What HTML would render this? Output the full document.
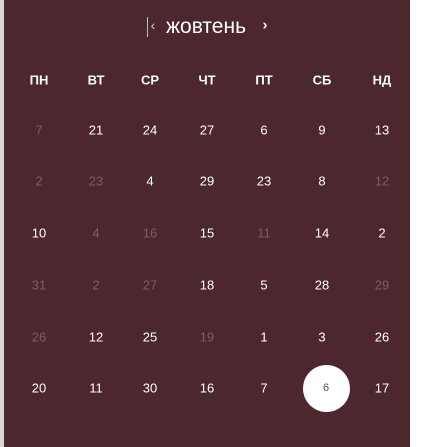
<!DOCTYPE html>
<html><head><meta charset="utf-8"><style>
body{margin:0;width:438px;height:447px;background:#fff;position:relative;overflow:hidden;font-family:"Liberation Sans",sans-serif}
.strip{position:absolute;left:0;top:0;width:4px;height:447px;background:#d8d8d8}
.p{position:absolute;left:4px;top:0;width:406px;height:447px;background:#4d272e}
.t{position:absolute;color:#fff;transform:translate(-50%,-50%);white-space:nowrap}
.h{font-weight:bold;font-size:13px}
.d{font-size:13px}
.m{color:#7d5d63}
.c{position:absolute;left:303px;top:365px;width:47px;height:47px;border-radius:50%;background:#fff}
</style></head><body>
<div class="strip"></div><div class="p"></div>
<div class="t" style="left:147px;top:26px;width:1px;height:20px;background:#bbb;transform:none;top:17px"></div>
<div class="t" style="left:153px;top:25px;font-size:14px;color:#ccc">‹</div>
<div class="t" style="left:206px;top:27px;font-size:21px">жовтень</div>
<div class="t" style="left:265px;top:25px;font-size:15px;font-weight:bold">›</div>
<div class="c"></div>
<div id="g"></div>
<script>
var xs=[39,96,150,207,264,322,382],ys=[130,181,233,285,337,388];
var hd=["ПН","ВТ","СР","ЧТ","ПТ","СБ","НД"];
var rows=[["7m","21","24","27","6","9","13"],["2m","23m","4","29","23","8","12m"],["10","4m","16m","15","11m","14","2"],["31m","2m","27m","18","5","28","29m"],["26m","12","25","19m","1","3","26"],["20","11","30","16","7","6s","17"]];
var h="";
hd.forEach((t,i)=>h+=`<div class="t h" style="left:${xs[i]}px;top:80px">${t}</div>`);
rows.forEach((r,j)=>r.forEach((v,i)=>{var m=v.endsWith("m"),s=v.endsWith("s");v=v.replace(/[ms]$/,"");
h+=`<div class="t d${m?' m':''}" style="left:${xs[i]+(s?4:0)}px;top:${ys[j]}px;${s?'color:#6a4a50;font-size:11px':''}">${v}</div>`}));
document.getElementById("g").innerHTML=h;
</script>
</body></html>
